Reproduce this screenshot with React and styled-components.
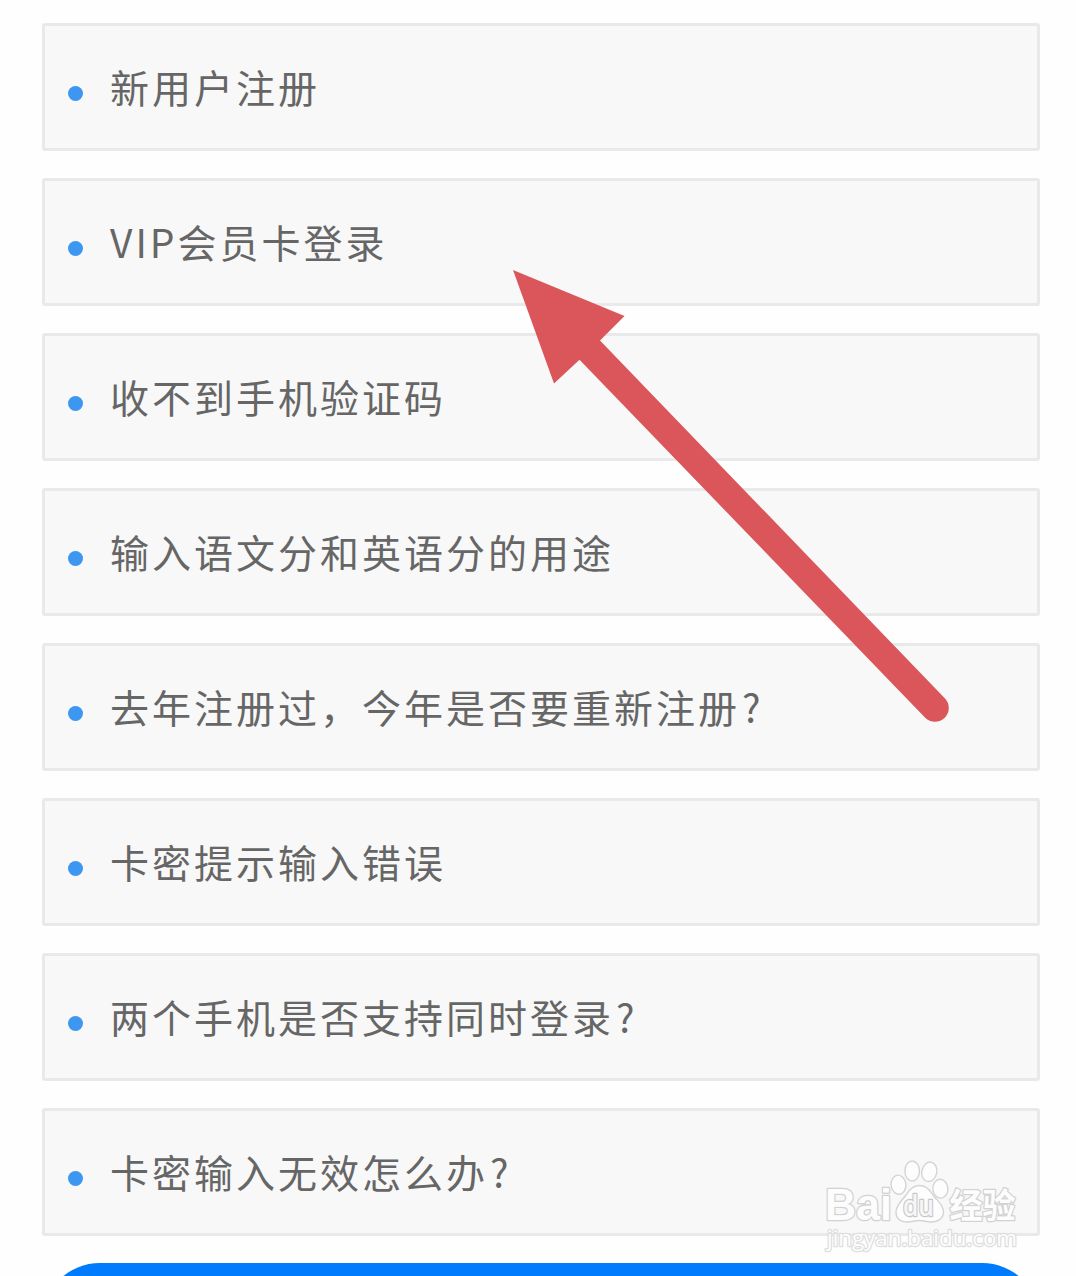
import styled, {createGlobalStyle} from 'styled-components'

const questions = [
	'新用户注册',
	'VIP会员卡登录',
	'收不到手机验证码',
	'输入语文分和英语分的用途',
	'去年注册过，今年是否要重新注册?',
	'卡密提示输入错误',
	'两个手机是否支持同时登录?',
	'卡密输入无效怎么办?',
]

/*START*/
const Item = ({text}) => {
	let asks = text.endsWith('?')

	return (
		<Card>
			<Dot />
			<Label>
				{asks ? text.slice(0, -1) : text}
				{asks && <Ask>?</Ask>}
			</Label>
		</Card>
	)
}

const Arrow = () => (
	<ArrowSvg viewBox="0 0 440 456">
		<path
			d="M1 2 L112.5 48 L88 72.5 L432.8 430.3 A13.7 13.7 0 0 1 413.2 449.7 L67.5 91.8 L42 115.5 Z"
			fill="#db565b"
		/>
	</ArrowSvg>
)

const Watermark = () => (
	<MarkSvg viewBox="0 0 200 100">
		<BrandText x="3" y="65" textLength="67" lengthAdjust="spacingAndGlyphs">Bai</BrandText>
		<g fill="#fdfdfd" stroke="#d4d4d4" strokeWidth="1.4">
			<ellipse cx="76.5" cy="29.7" rx="7.4" ry="9.6" transform="rotate(-6 76.5 29.7)" />
			<ellipse cx="90.2" cy="16" rx="7.3" ry="10" />
			<ellipse cx="107.3" cy="16.8" rx="7.5" ry="9.8" transform="rotate(12 107.3 16.8)" />
			<ellipse cx="118.4" cy="33.7" rx="7.5" ry="9.4" transform="rotate(-4 118.4 33.7)" />
			<path d="M97.5 30.5 C104 30.5 108 35 111 40 C115 46 121.5 49 121.5 57 C121.5 64 115 67 109 67 C104 67 102 65.5 97.5 65.5 C93 65.5 90 67 86 67 C78 67 74 63 74 57 C74 50 80 46 84 40 C87 35 91 30.5 97.5 30.5 Z" />
		</g>
		<PawText x="81" y="61" textLength="31" lengthAdjust="spacingAndGlyphs">du</PawText>
		<NameText x="127.5" y="63" textLength="66" lengthAdjust="spacingAndGlyphs">经验</NameText>
		<UrlText x="5" y="91" textLength="190" lengthAdjust="spacingAndGlyphs">jingyan.baidu.com</UrlText>
	</MarkSvg>
)

const App = () => (
	<Page>
		<Global />
		<List>
			{questions.map((q) => (
				<Item text={q} key={q} />
			))}
		</List>
		<Submit />
		<Arrow />
		<Watermark />
	</Page>
)

/*Style*/
const Global = createGlobalStyle`
	* {
		box-sizing: border-box;
	}
	body {
		margin: 0;
		background: #fefefe;
	}
`

const Page = styled.div`
	position: relative;
	height: 1276px;
	padding: 23px 36px 0 42px;
	overflow: hidden;
	font-family: 'Noto Sans CJK SC', sans-serif;
`

const List = styled.ul`
	display: flex;
	flex-direction: column;
	gap: 27px;
	margin: 0;
	padding: 0;
	list-style: none;
`

const Card = styled.li`
	display: flex;
	align-items: center;
	height: 128px;
	padding-left: 23px;
	background: #f8f8f8;
	border: 3px solid #e9e9e9;
	border-radius: 3px;
`

const Dot = styled.span`
	width: 15px;
	height: 15px;
	margin: 12px 27px 0 0;
	border-radius: 50%;
	background: #3d97f0;
`

const Label = styled.span`
	padding-bottom: 3px;
	font-size: 39px;
	line-height: 60px;
	letter-spacing: 3px;
	white-space: nowrap;
	color: #666;
`

const Ask = styled.span`
	margin-left: 2px;
`

const Submit = styled.button`
	display: block;
	width: 100%;
	height: 116px;
	margin-top: 27px;
	border: none;
	border-radius: 58px;
	background: #007bfe;
`

/* drawn over the list */
const ArrowSvg = styled.svg`
	position: absolute;
	left: 512px;
	top: 268px;
	width: 440px;
	height: 456px;
`

const MarkSvg = styled.svg`
	position: absolute;
	left: 822px;
	top: 1155px;
	width: 200px;
	height: 100px;
`

const MarkText = styled.text`
	fill: #fdfdfd;
	stroke: #d2d2d2;
	stroke-width: 2.6px;
	stroke-linejoin: round;
	paint-order: stroke;
`

const BrandText = styled(MarkText)`
	font: 700 44px 'Liberation Sans', sans-serif;
`

const PawText = styled(MarkText)`
	font: 600 28px 'Open Sans', sans-serif;
	fill: #f6f6f6;
	stroke: #c8c8c8;
`

const NameText = styled(MarkText)`
	font: 700 34px 'Noto Sans CJK SC', sans-serif;
`

const UrlText = styled(MarkText)`
	font: 400 22px 'Open Sans', sans-serif;
	stroke: #dedede;
`

export default App
